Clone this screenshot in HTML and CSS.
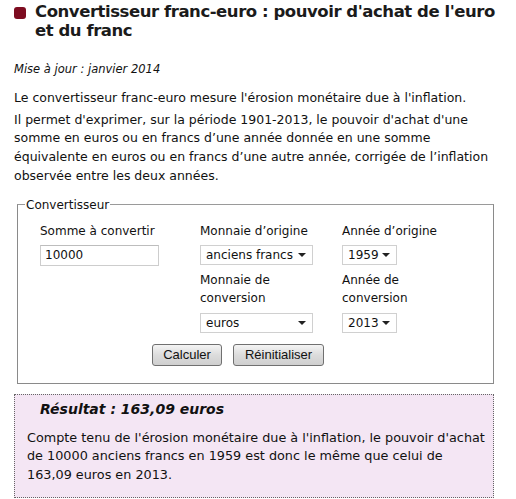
FILE: index.html
```html
<!DOCTYPE html>
<html lang="fr">
<head>
<meta charset="utf-8">
<link rel="stylesheet" href="styles.css">
</head>
<body>
<div class="page">
  <h1 class="title"><span class="bullet"></span><span class="title-text">Convertisseur franc-euro : pouvoir d'achat de l'euro et du franc</span></h1>
  <p class="update">Mise à jour : janvier 2014</p>
  <p class="intro">Le convertisseur franc-euro mesure l'érosion monétaire due à l'inflation.</p>
  <p class="intro">Il permet d'exprimer, sur la période 1901-2013, le pouvoir d'achat d'une somme en euros ou en francs d’une année donnée en une somme équivalente en euros ou en francs d’une autre année, corrigée de l’inflation observée entre les deux années.</p>
  <fieldset class="conv">
    <legend class="legend">Convertisseur</legend>
    <div class="grid">
      <div class="lab">Somme à convertir</div>
      <div class="lab">Monnaie d’origine</div>
      <div class="lab">Année d’origine</div>
      <div class="ctl"><span class="input">10000</span></div>
      <div class="ctl"><span class="select wide">anciens francs<span class="arrow"></span></span></div>
      <div class="ctl"><span class="select narrow">1959<span class="arrow"></span></span></div>
      <div class="lab"></div>
      <div class="lab two">Monnaie de<br>conversion</div>
      <div class="lab two">Année de<br>conversion</div>
      <div class="ctl"></div>
      <div class="ctl"><span class="select wide">euros<span class="arrow"></span></span></div>
      <div class="ctl"><span class="select narrow">2013<span class="arrow"></span></span></div>
    </div>
    <div class="buttons">
      <span class="btn calc">Calculer</span>
      <span class="btn reset">Réinitialiser</span>
    </div>
  </fieldset>
  <div class="result">
    <p class="res-title">Résultat : 163,09 euros</p>
    <p class="res-text">Compte tenu de l'érosion monétaire due à l'inflation, le pouvoir d'achat de&nbsp;10000&nbsp;anciens francs en 1959 est donc le même que celui de 163,09&nbsp;euros en 2013.</p>
  </div>
</div>
</body>
</html>
```
FILE: styles.css
```css
html, body { margin: 0; padding: 0; background: #fff; }
body { font-family: "DejaVu Sans", Verdana, sans-serif; color: #111; }
.page { padding: 2px 20px 0 14px; }
.title { display: flex; align-items: flex-start; margin: 0 -16px 0 0; font-size: 16.5px; letter-spacing: -0.45px; line-height: 19px; font-weight: bold; color: #1b1b1b; }
.bullet { flex: none; width: 12px; height: 12px; border-radius: 3px; background: #7d0c20; margin: 5px 9px 0 0; }
.title-text { display: block; }
.update { margin: 22px 0 0; font-size: 11.5px; font-style: italic; line-height: 14px; }
.intro { margin: 13px 0 0; font-size: 12.5px; line-height: 18.7px; }
.intro + .intro { margin-top: 3px; }
.conv { margin: 12px 2px 0 3px; padding: 7px 0 17px 22px; border: 1px solid #8a8a8a; border-top-color: #9a9a9a; }
.legend { padding: 0 1px; font-size: 12px; line-height: 14px; margin-left: -15px; }
.grid { display: grid; grid-template-columns: 160px 142px 120px; }
.lab { font-size: 12px; line-height: 18px; padding: 3px 0 5px; }
.lab.two { padding: 0 0 6px; }
.ctl { height: 26px; }
.ctl:nth-child(n+10) { height: 23px; }
.input { display: block; box-sizing: border-box; width: 119px; height: 21px; border: 1px solid #cdcdcd; border-top-color: #bdbdbd; font-size: 12px; line-height: 19px; padding-left: 4px; }
.select { display: flex; align-items: center; justify-content: space-between; box-sizing: border-box; height: 20px; border: 1px solid #d0d0d0; font-size: 12px; padding: 0 6px 0 5px; }
.select.wide { width: 113px; }
.select.narrow { width: 55px; }
.arrow { width: 0; height: 0; border-left: 4px solid transparent; border-right: 4px solid transparent; border-top: 4px solid #222; }
.buttons { display: flex; gap: 11px; margin: 8px 0 0 112px; }
.btn { display: block; box-sizing: border-box; height: 22px; text-align: center; border: 1px solid #707070; border-radius: 3px; background: linear-gradient(#f4f4f4, #dcdcdc 50%, #cfcfcf); font-family: "Liberation Sans", Arial, sans-serif; font-size: 13px; line-height: 20px; color: #111; }
.btn.calc { width: 70px; }
.btn.reset { width: 91px; }
.result { margin: 10px 2px 4px 0; border: 1px dotted #666; background: #f4e6f4; padding: 6px 3px 12px 12px; }
.res-title { margin: 0 0 0 13px; font-size: 14px; font-weight: bold; font-style: italic; line-height: 17px; }
.res-text { margin: 11px 0 0; font-size: 12.8px; line-height: 18.7px; }
```
